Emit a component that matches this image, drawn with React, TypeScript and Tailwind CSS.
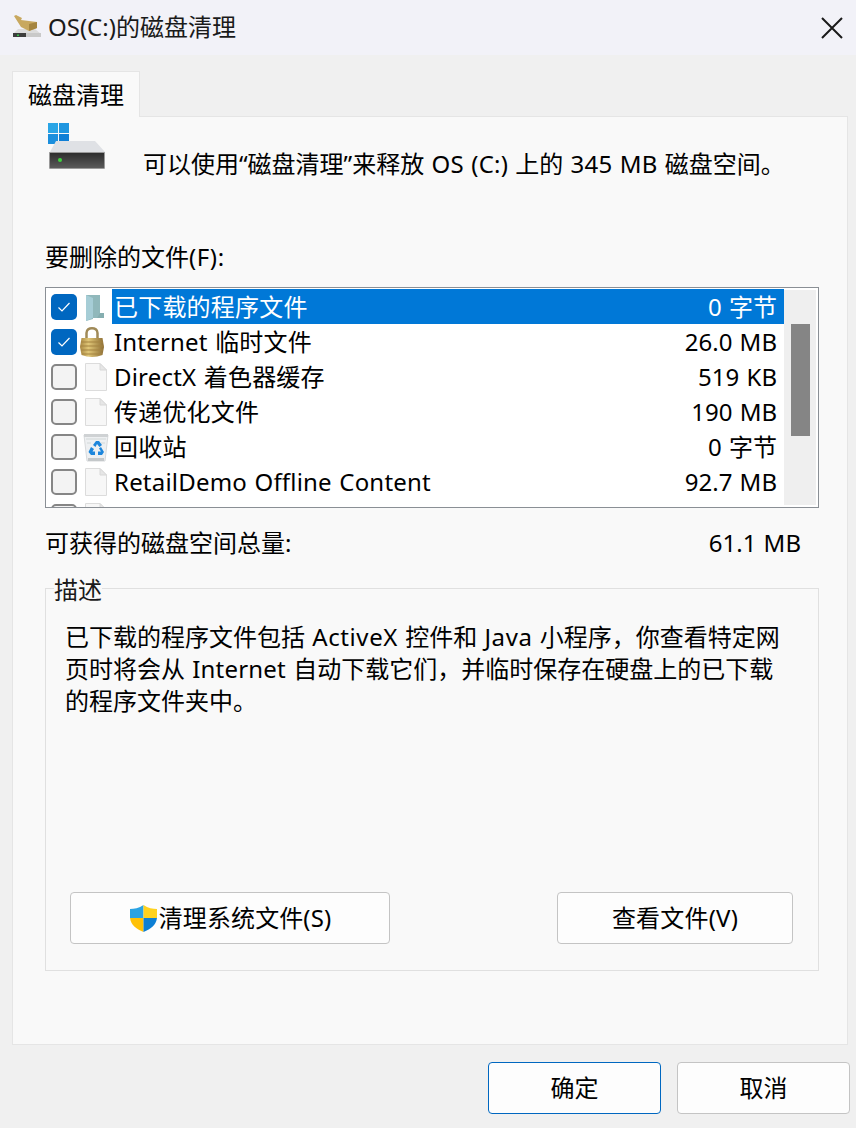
import type { FC } from "react";
import React from "react";

const font = "font-['Noto_Sans','Noto_Sans_CJK_SC',sans-serif]";

// latin runs come out a touch narrower than in the reference
const L: FC<{ children: React.ReactNode }> = ({ children }) => (
  <span className="tracking-[0.2px]">{children}</span>
);

const DocIcon: FC = () => (
  <svg width="24" height="30" viewBox="0 0 24 30">
    <path d="M1.5 1.5H16L22.5 8V28.5H1.5Z" fill="#f7f7f7" stroke="#dcdcdc" />
    <path d="M16 1.5V8H22.5Z" fill="#e6e6e6" stroke="#d8d8d8" />
  </svg>
);

const FolderIcon: FC = () => (
  <svg width="24" height="30" viewBox="0 0 24 30">
    <path d="M2 3H16V21H20V26H9V27L2 29Z" fill="#90b8bb" />
    <path d="M2 3L9 6V26L2 29Z" fill="#a6cdd6" />
    <path d="M16 21H20V26H13Z" fill="#86aeb0" />
  </svg>
);

const LockIcon: FC = () => (
  <svg className="-ml-[2px]" width="32" height="32" viewBox="0 0 32 32">
    <defs>
      <linearGradient id="lockBody" x1="0" x2="1" y1="0" y2="0">
        <stop offset="0" stopColor="#a98842" />
        <stop offset="0.35" stopColor="#e0c677" />
        <stop offset="1" stopColor="#8e6f35" />
      </linearGradient>
    </defs>
    <path d="M7.5 14V7C7.5 0.5 18.5 0.5 18.5 7V14" fill="none" stroke="#a08a58" strokeWidth="2.5" />
    <path d="M2.5 12H23.5L25 21L23.5 29Q13 33 2.5 29L1 21Z" fill="url(#lockBody)" />
    <path d="M2 16H24M1.5 20H24.5M2 24H24M3 28H23" stroke="#a48340" strokeWidth="1" />
  </svg>
);

const RecycleIcon: FC = () => (
  <svg width="26" height="30" viewBox="0 0 26 30">
    <path d="M1 3H25L22 29H4Z" fill="#eef0f2" stroke="#d8dadc" />
    <path d="M1 2H25V5H1Z" fill="#cfd2d4" />
    <path d="M3 7H23M4 11H8M18 11H22" stroke="#dcdfe1" strokeWidth="1.5" />
    <path d="M5 26H21V29H5Z" fill="#c4c8ca" />
    <path d="M10 13L13 9H16L19 13L16.5 15L14 12L12.5 15Z" fill="#1d86dc" />
    <path d="M18 15L21 20L19 23H15V19.5L18 19.5L16 16.5Z" fill="#1d86dc" />
    <path d="M8 15L11 17L9.5 19.5H12V23H8L5.5 20Z" fill="#1d86dc" />
  </svg>
);

const CheckBox: FC<{ checked: boolean }> = ({ checked }) =>
  checked ? (
    <span className="flex h-[26px] w-[26px] shrink-0 items-center justify-center rounded-[5px] bg-[#0067c0]">
      <svg width="14" height="12" viewBox="0 0 14 12">
        <path d="M1.5 6.5L5 10L12.5 2" fill="none" stroke="#ffffff" strokeWidth="1.2" />
      </svg>
    </span>
  ) : (
    <span className="h-[26px] w-[26px] shrink-0 rounded-[5px] border-2 border-[#868686] bg-[#f3f3f3]" />
  );

const rows = [
  { name: "已下载的程序文件", size: "0 字节", checked: true, icon: <FolderIcon /> },
  { name: "Internet 临时文件", size: "26.0 MB", checked: true, icon: <LockIcon /> },
  { name: "DirectX 着色器缓存", size: "519 KB", checked: false, icon: <DocIcon /> },
  { name: "传递优化文件", size: "190 MB", checked: false, icon: <DocIcon /> },
  { name: "回收站", size: "0 字节", checked: false, icon: <RecycleIcon /> },
  { name: "RetailDemo Offline Content", size: "92.7 MB", checked: false, icon: <DocIcon /> },
  { name: "", size: "", checked: false, icon: <DocIcon /> },
];

const FileRow: FC<{ row: (typeof rows)[number]; selected: boolean }> = ({ row, selected }) => (
  <div className="flex h-[35px] shrink-0 items-center pl-[5px]">
    <CheckBox checked={row.checked} />
    <span className="flex w-[35px] shrink-0 justify-center pl-[2px]">{row.icon}</span>
    <div
      className={`flex h-[35px] flex-1 items-center justify-between pr-[7px] pl-[2px] ${
        selected ? "bg-[#0078d7] text-white" : "text-black"
      }`}
    >
      <span>
        <L>{row.name}</L>
      </span>
      <span>{row.size}</span>
    </div>
  </div>
);

const DriveIcon: FC = () => (
  <svg width="60" height="48" viewBox="0 0 60 48">
    <defs>
      <linearGradient id="driveFront" x1="0" x2="0" y1="0" y2="1">
        <stop offset="0" stopColor="#2c2c2c" />
        <stop offset="1" stopColor="#5c5c5c" />
      </linearGradient>
    </defs>
    <rect x="0" y="0" width="10" height="10" fill="#2aa5e6" />
    <rect x="11" y="0" width="10" height="10" fill="#1f96e0" />
    <rect x="0" y="11" width="10" height="10" fill="#1b8fdd" />
    <rect x="11" y="11" width="10" height="10" fill="#0f7fd6" />
    <path d="M8 18H47L57 29H2Z" fill="#dfe1e5" />
    <path d="M1.5 29.5H56.5V45Q56.5 45.5 56 45.5H2Q1.5 45.5 1.5 45Z" fill="url(#driveFront)" stroke="#9a9a9a" />
    <circle cx="12" cy="37" r="2" fill="#3ed43e" />
  </svg>
);

const TitleIcon: FC = () => (
  <svg width="30" height="24" viewBox="0 0 30 24">
    <path d="M5 14H22L28 19V22H0V19Z" fill="#dcdcdc" />
    <path d="M0 18H13V22H0Z" fill="#3d3d3d" />
    <path d="M13 18H28V22H13Z" fill="#c9c9c9" />
    <rect x="4" y="19.5" width="2" height="1.5" fill="#37c14a" />
    <path d="M1 1L3 0L9 3L8 5L24 7V13L16 16L8 12Z" fill="#c8a85f" />
    <path d="M16 9L24 7V13L16 16Z" fill="#a5853f" />
  </svg>
);

const ShieldIcon: FC = () => (
  <svg width="29" height="29" viewBox="0 0 29 29">
    <path d="M14.5 1C10 4 5 5 1 5V14H14.5Z" fill="#2ba3e3" />
    <path d="M14.5 1C19 4 24 5 28 5V14H14.5Z" fill="#ffd21e" />
    <path d="M1 14H14.5V28C7 25 2 21 1 14Z" fill="#ffc107" />
    <path d="M28 14H14.5V28C22 25 27 21 28 14Z" fill="#0d7fd4" />
  </svg>
);

const Btn: FC<{ className: string; children: React.ReactNode }> = ({ className, children }) => (
  <button className={`flex items-center justify-center rounded-[4px] border bg-[#fdfdfd] text-black ${className}`}>
    {children}
  </button>
);

export default function App() {
  return (
    <div
      className={`flex h-[1128px] w-[856px] flex-col overflow-hidden bg-[#f0f0f0] text-[24px] leading-[32px] text-[#1a1a1a] [word-spacing:1px] ${font}`}
    >
      <div className="flex h-[55px] shrink-0 items-center justify-between bg-[#f2f2f8] px-[13px]">
        <div className="-mt-[2px] flex items-center gap-[5px]">
          <TitleIcon />
          <span>OS(C:)的磁盘清理</span>
        </div>
        <svg width="22" height="22" viewBox="0 0 22 22">
          <path d="M1 1L21 21M21 1L1 21" stroke="#1a1a1a" strokeWidth="2" />
        </svg>
      </div>

      <div className="flex flex-1 flex-col pt-[16px] pr-[8px] pl-[12px]">
        <div className="z-10 -mb-px flex h-[46px] w-[128px] items-center justify-center border border-b-0 border-[#e5e5e5] bg-[#f9f9f9] text-black">
          磁盘清理
        </div>
        <div className="flex h-[929px] flex-col border border-[#e5e5e5] bg-[#f9f9f9] pt-[6px] pr-[28px] pl-[32px]">
          <div className="flex items-start">
            <div className="ml-[3px] w-[95px] shrink-0">
              <DriveIcon />
            </div>
            <p className="mt-[25px] text-black">
              可以使用“磁盘清理”来释放 <L>OS (C:)</L> 上的 <L>345 MB</L> 磁盘空间。
            </p>
          </div>
          <p className="mt-[61px] text-black">
            要删除的文件<span className="tracking-[0.6px]">(F):</span>
          </p>
          <div className="mt-[14px] flex h-[221px] shrink-0 overflow-hidden border border-[#8a8f95] bg-white">
            <div className="flex min-w-0 flex-1 flex-col pt-[1px]">
              {rows.map((row, i) => (
                <FileRow key={i} row={row} selected={i === 0} />
              ))}
            </div>
            <div className="w-[34px] shrink-0 border-2 border-l-0 border-white bg-[#efefef] pt-[34px] pl-[7px]">
              <div className="h-[112px] w-[19px] bg-[#858585]" />
            </div>
          </div>
          <div className="mt-[19px] flex justify-between pr-[18px] text-black">
            <span>可获得的磁盘空间总量:</span>
            <span>61.1 MB</span>
          </div>
          <div className="relative mt-[29px] flex h-[383px] flex-col border border-[#e0e0e0] px-[20px] pt-[32px] pb-[26px]">
            <span className="absolute -top-[15px] left-[8px] bg-[#f9f9f9] text-[#1a1a1a]">描述</span>
            <p className="-ml-px whitespace-nowrap text-black">
              已下载的程序文件包括 <span className="tracking-[0.6px]">ActiveX</span> 控件和{" "}
              <span className="tracking-[0.6px]">Java</span> 小程序，你查看特定网
              <br />
              页时将会从 <L>Internet</L> 自动下载它们，并临时保存在硬盘上的已下载
              <br />
              的程序文件夹中。
            </p>
            <div className="mt-auto flex justify-between pr-[5px] pl-[4px]">
              <Btn className="h-[52px] w-[320px] border-[#c4c4c4]">
                <ShieldIcon />
                <span className="ml-px tracking-[0.1px]">清理系统文件(S)</span>
              </Btn>
              <Btn className="h-[52px] w-[236px] border-[#c4c4c4]">
                <span className="tracking-[0.2px]">查看文件(V)</span>
              </Btn>
            </div>
          </div>
        </div>
        <div className="-mr-[2px] mt-[17px] flex justify-end gap-[16px]">
          <Btn className="h-[52px] w-[173px] border-[#0067c0]">确定</Btn>
          <Btn className="h-[52px] w-[173px] border-[#c4c4c4]">取消</Btn>
        </div>
      </div>
    </div>
  );
}
